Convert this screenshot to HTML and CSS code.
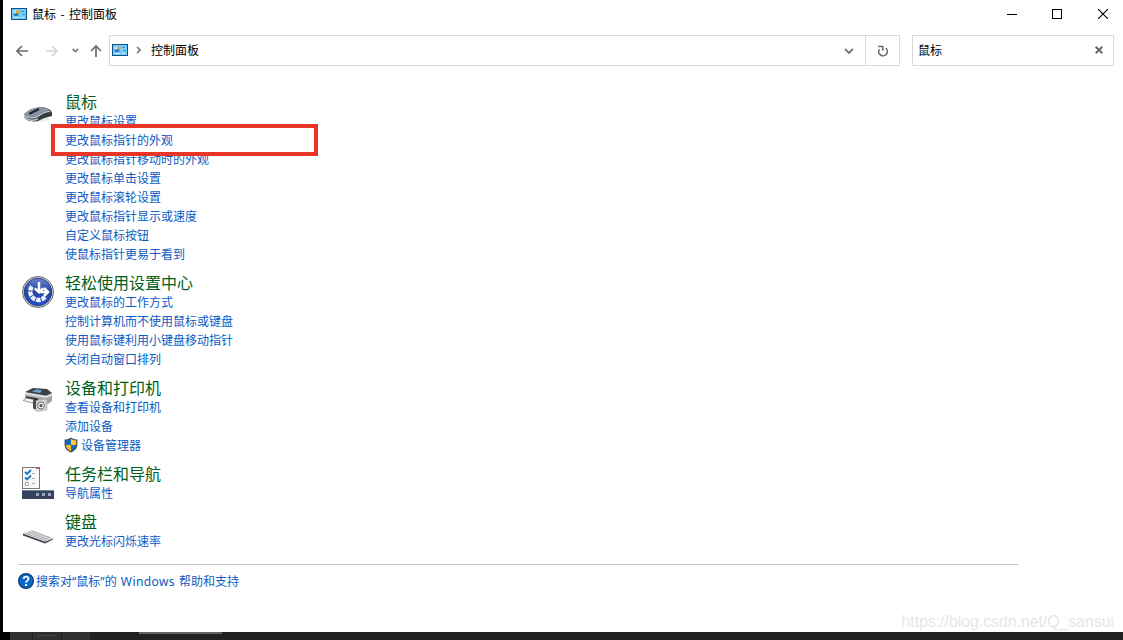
FILE: index.html
```html
<!DOCTYPE html>
<html lang="zh-CN">
<head>
    <meta charset="UTF-8" />
    <meta name="viewport" content="width=device-width, initial-scale=1.0" />
    <title>鼠标 - 控制面板</title>
    <link rel="stylesheet" href="styles.css">
</head>
<body>
    <!-- Shared icons -->
    <svg class="sprite" aria-hidden="true">
        <symbol id="icon-panel" viewBox="0 0 16 12">
            <rect width="16" height="12" fill="#0f5288" />
            <rect x="1" y="1" width="14" height="10" fill="#72cbfa" />
            <circle cx="5" cy="5.500" r="2.600" fill="#1579c5" />
            <path d="M5 5.500V2.500a3 3 0 0 0-3 3z" fill="#b5e3fb" />
            <path d="M5 5.500V2a3.400 3.400 0 0 1 3.300 3.500z" fill="#f7a52a" />
            <path d="M10 3.500h3M11 6.500h3" stroke="#3f94cc" />
            <path d="M10 6.500h1M3 9.500h5M10 9.500h3" stroke="#c9ecff" />
        </symbol>
    </svg>

    <div class="window">
        <!-- Title bar -->
        <header class="titlebar">
            <svg class="panel-icon"><use href="#icon-panel" /></svg>
            <span class="title">鼠标 - 控制面板</span>
            <div class="controls">
                <svg class="minimize" width="10" height="10" viewBox="0 0 10 10" shape-rendering="crispEdges"><path d="M0 5.500h10" stroke="#000" /></svg>
                <svg width="10" height="10" viewBox="0 0 10 10"><rect x=".5" y=".5" width="9" height="9" fill="none" stroke="#000" /></svg>
                <svg width="10" height="10" viewBox="0 0 10 10"><path d="M0 0l10 10M10 0L0 10" stroke="#000" stroke-width="1.1" /></svg>
            </div>
        </header>

        <!-- Navigation bar -->
        <nav class="navbar">
            <div class="nav-buttons">
                <svg width="12" height="12" viewBox="0 0 12 12"><path d="M12 6H1M6 1L1 6l5 5" fill="none" stroke="#6b6b6b" stroke-width="1.7" /></svg>
                <svg class="forward" width="12" height="12" viewBox="0 0 12 12"><path d="M0 6h11M6 1l5 5-5 5" fill="none" stroke="#d5d5d5" stroke-width="1.7" /></svg>
                <svg class="recent" width="7" height="5" viewBox="0 0 7 5"><path d="M.7.8l2.800 2.800L6.300.8" fill="none" stroke="#777" stroke-width="1.700" /></svg>
                <svg class="up" width="12" height="12" viewBox="0 0 12 12"><path d="M6 12V1M1 6l5-5 5 5" fill="none" stroke="#6b6b6b" stroke-width="1.7" /></svg>
            </div>
            <div class="address">
                <div class="path">
                    <svg class="panel-icon"><use href="#icon-panel" /></svg>
                    <svg class="crumb" width="5" height="8" viewBox="0 0 5 8"><path d="M1 1l3 3-3 3" fill="none" stroke="#777" stroke-width="1.6" /></svg>
                    <span>控制面板</span>
                    <svg class="dropdown" width="10" height="7" viewBox="0 0 10 7"><path d="M1 1l4 4 4-4" fill="none" stroke="#777" stroke-width="1.9" /></svg>
                </div>
                <div class="refresh">
                    <svg width="12" height="12" viewBox="0 0 12 12"><path d="M8.800 3.200A4.300 4.300 0 1 1 2.400 4.200" fill="none" stroke="#6b6b6b" stroke-width="1.600" /><path d="M1.200 1.600h4.600v4.200" fill="none" stroke="#6b6b6b" stroke-width="1.500" /></svg>
                </div>
            </div>
            <div class="search">
                <span>鼠标</span>
                <svg width="8" height="8" viewBox="0 0 8 8"><path d="M.7.7l6.600 6.600M7.300.7L.7 7.300" stroke="#6b6b6b" stroke-width="2" /></svg>
            </div>
        </nav>

        <!-- Search results -->
        <main class="results">
            <section class="group">
                <svg class="group-icon" width="32" height="40" viewBox="0 0 32 40">
                    <ellipse cx="16" cy="26" rx="12" ry="3" fill="#ececec" />
                    <path d="M2 21.500C5 18 12 14 19 14.300c6 .2 11 2.700 11 6.200v2.500c-4 .5-9 2.500-13 4.500-4 2-14 .5-15-3.500z" fill="#343a41" />
                    <path d="M2 21.500c3-4 10-7 17-7.200 5 0 8 2 8.500 4-4 0-8 2-11.500 5.200-4 2.500-12 2-14-2z" fill="#8794a3" />
                    <path d="M2 22c2 3.500 10 4 14 1.500 4-3 8-5 12-5" fill="none" stroke="#d7dce1" stroke-width="1" />
                    <path d="M2 23c2 4.500 9 5 14 3" fill="none" stroke="#b7bdc4" stroke-width="1.500" />
                    <path d="M8 20.500l8-4" stroke="#20252b" stroke-width="2.200" stroke-linecap="round" />
                </svg>
                <div class="links">
                    <h2>鼠标</h2>
                    <a href="#">更改鼠标设置</a>
                    <a href="#" class="marked">更改鼠标指针的外观</a>
                    <a href="#">更改鼠标指针移动时的外观</a>
                    <a href="#">更改鼠标单击设置</a>
                    <a href="#">更改鼠标滚轮设置</a>
                    <a href="#">更改鼠标指针显示或速度</a>
                    <a href="#">自定义鼠标按钮</a>
                    <a href="#">使鼠标指针更易于看到</a>
                </div>
            </section>

            <section class="group">
                <svg class="group-icon" width="32" height="36" viewBox="0 0 32 36">
                    <defs>
                        <linearGradient id="blue" x1="0" y1="0" x2="0" y2="1">
                            <stop offset="0" stop-color="#6685cc" />
                            <stop offset=".5" stop-color="#2445a5" />
                            <stop offset="1" stop-color="#2451cb" />
                        </linearGradient>
                    </defs>
                    <circle cx="16" cy="18" r="15.500" fill="#d7d9dd" stroke="#666a70" />
                    <circle cx="16" cy="18" r="13.800" fill="url(#blue)" stroke="#1b2d69" stroke-width=".8" />
                    <path d="M10 12.600A8 8 0 1 0 23 22.800" fill="none" stroke="#edf2fc" stroke-width="4.500" stroke-dasharray="4.300 1" />
                    <path d="M17 8v9.500M12.800 14.300l4.200 4 4.200-4M17 18h8M22 14l4 4-4 4" fill="none" stroke="#fff" stroke-width="2.500" />
                </svg>
                <div class="links">
                    <h2>轻松使用设置中心</h2>
                    <a href="#">更改鼠标的工作方式</a>
                    <a href="#">控制计算机而不使用鼠标或键盘</a>
                    <a href="#">使用鼠标键利用小键盘移动指针</a>
                    <a href="#">关闭自动窗口排列</a>
                </div>
            </section>

            <section class="group">
                <svg class="group-icon" width="32" height="40" viewBox="0 0 32 40">
                    <path d="M3 14l3-1 24 1v8l-4 3-23-4z" fill="#a2a4a7" />
                    <path d="M3 13l8-4 14 1 5 4-6 2.500z" fill="#3c4148" />
                    <path d="M10 12.500l4-2 6 .8-2 2.700z" fill="#67a5d3" />
                    <path d="M3 13.500l21 3.500 6-2.500v2L24 19 3 15.500z" fill="#dfe0e2" />
                    <path d="M4 17.500l12 2v3l-12-2z" fill="#25272b" />
                    <path d="M1 21.500l3-2.500 8 1.500-1 3.500z" fill="#f4f4f4" stroke="#777" stroke-width=".7" />
                    <path d="M14 21.500l9-1.500 2 1v10l-10 1.500-2-1.500z" fill="#d0d2d4" stroke="#999" stroke-width=".5" />
                    <path d="M11 20.500l3 .5v9.500l-3-1z" fill="#4b4e52" />
                    <circle cx="19" cy="26.500" r="3.500" fill="#e7e7e7" stroke="#6c6e72" />
                    <circle cx="19" cy="26.500" r="1.500" fill="#4d5157" />
                </svg>
                <div class="links">
                    <h2>设备和打印机</h2>
                    <a href="#">查看设备和打印机</a>
                    <a href="#">添加设备</a>
                    <a href="#" class="admin">
                        <svg width="14" height="16" viewBox="0 0 14 16">
                            <path d="M7 .5C5 2 2.800 2.500.6 2.500v5c0 4 3 6.500 6.400 8 3.400-1.500 6.400-4 6.400-8v-5C11.200 2.500 9 2 7 .5z" fill="#3d4b59" />
                            <path d="M7 1.800C5.500 2.900 3.600 3.400 1.800 3.500V8H7z" fill="#1768c5" />
                            <path d="M7 1.800C8.500 2.900 10.400 3.400 12.200 3.500V8H7z" fill="#ffc72c" />
                            <path d="M1.800 8H7v6.200C4.300 12.900 2 11 1.800 8z" fill="#ffc02a" />
                            <path d="M12.200 8H7v6.200c2.700-1.300 5-3.200 5.200-6.200z" fill="#1768c5" />
                        </svg>
                        设备管理器
                    </a>
                </div>
            </section>

            <section class="group">
                <svg class="group-icon" width="32" height="36" viewBox="0 0 32 36">
                    <rect x=".5" y="2.500" width="17" height="21" fill="#f8f8f8" stroke="#777" />
                    <path d="M14 3.500h3" stroke="#d94c4c" />
                    <path d="M3.500 17.500h3v3h-3z" fill="#fff" stroke="#aaa" />
                    <path d="M3 7l2 2 4-4M3 12.500l2 2 4-4" fill="none" stroke="#1679bd" stroke-width="1.800" />
                    <path d="M10 8.500h3M10 13.500h3M10 18.500h3" stroke="#aaa" />
                    <rect y="25" width="32" height="9" fill="#35425d" />
                    <path d="M0 25.500h32" stroke="#7482a0" />
                    <path d="M14 28h3v3h-3zM20 28h3v3h-3zM26 28h3v3h-3z" fill="#9ca8bd" />
                </svg>
                <div class="links">
                    <h2>任务栏和导航</h2>
                    <a href="#">导航属性</a>
                </div>
            </section>

            <section class="group">
                <svg class="group-icon" width="32" height="38" viewBox="0 0 32 38">
                    <path d="M1 20.500l22 8 8-3v1l-8 4L1 22.500z" fill="#42474d" />
                    <path d="M1 20.500l9-3.500 21 8-8 3.500z" fill="#d2d4d6" />
                    <path d="M4 20.500l20 7M7 19.300l19 7M10 18l18 6.800" stroke="#92969a" stroke-width=".8" stroke-dasharray="1.500 1" />
                </svg>
                <div class="links">
                    <h2>键盘</h2>
                    <a href="#">更改光标闪烁速率</a>
                </div>
            </section>

            <!-- Help link -->
            <div class="help">
                <svg width="16" height="16" viewBox="0 0 16 16">
                    <circle cx="8" cy="8" r="7.400" fill="#0967c8" stroke="#103e70" stroke-width="1.200" />
                    <path d="M5.700 6c0-3 4.800-3 4.800-.3 0 2-2.400 1.800-2.400 4" fill="none" stroke="#fff" stroke-width="1.800" />
                    <path d="M7.100 11h2v2h-2z" fill="#fff" />
                </svg>
                <a href="#">搜索对<span class="quote">“</span>鼠标<span class="quote">”</span>的 <span class="latin">Windows</span> 帮助和支持</a>
            </div>
        </main>

        <div class="watermark">https://blog.csdn.net/Q_sansui</div>
    </div>

    <!-- Taskbar edge -->
    <footer class="taskbar">
        <span class="task"></span>
        <span class="task lined"></span>
        <span class="task"></span>
        <span class="active-line"></span>
    </footer>
</body>
</html>
```
FILE: styles.css
```css
:root {
    --link-color: #0b5bc4;
    --heading-color: #00611c;
    --border-color: #d9d9d9;
    --mark-color: #e93528;
}

*,
*::before,
*::after {
    margin: 0;
    padding: 0;
    box-sizing: border-box;
}

body {
    display: flex;
    flex-direction: column;
    width: 1123px;
    height: 640px;
    overflow: hidden;
    background: #000;
    color: #000;
    font-family: "Noto Sans CJK SC", sans-serif;
    font-size: 12px;
}

svg {
    display: block;
    flex: none;
}

.sprite {
    position: absolute;
    width: 0;
    height: 0;
}

.window {
    position: relative;
    height: 632px;
    margin-left: 3px;
    background: #fff;
}

.panel-icon {
    width: 16px;
    height: 12px;
}

/* Title bar */
.titlebar {
    display: flex;
    align-items: center;
    height: 29px;
    padding: 0 15px 1px 8px;
}

.title {
    margin-left: 5px;
    padding-bottom: 2px;
    word-spacing: 1.7px;
}

.controls {
    display: flex;
    gap: 36px;
    margin-left: auto;
}

.minimize {
    margin-right: -1px;
}

/* Navigation bar */
.navbar {
    display: flex;
    height: 37px;
    padding: 6px 9px 0 13px;
}

.nav-buttons {
    display: flex;
    align-items: center;
    width: 93px;
}

.forward {
    margin-left: 18px;
}

.recent {
    margin-left: 14px;
}

.up {
    margin-left: 11px;
}

.address {
    display: flex;
    width: 791px;
    border: 1px solid var(--border-color);
}

.path {
    display: flex;
    align-items: center;
    flex: 1;
    padding: 0 11px 2px 2px;
}

.crumb {
    margin: 0 10px 0 8px;
}

.dropdown {
    margin-top: 3px;
    margin-left: auto;
}

.refresh {
    display: flex;
    align-items: center;
    justify-content: center;
    width: 34px;
    border-left: 1px solid var(--border-color);
}

.search {
    display: flex;
    align-items: center;
    justify-content: space-between;
    width: 202px;
    margin-left: 12px;
    padding: 0 10px 2px 5px;
    border: 1px solid var(--border-color);
}

/* Search results */
.results {
    padding: 26px 0 0 15px;
}

.group {
    display: flex;
    margin-bottom: 10px;
    padding-left: 4px;
}

.group-icon {
    margin-top: 1px;
    margin-right: 11px;
    margin-bottom: -2px;
}

.links h2 {
    height: 19px;
    color: var(--heading-color);
    font-size: 16px;
    font-weight: 400;
    line-height: 19px;
}

.links a {
    display: block;
    height: 19px;
    line-height: 19px;
}

a {
    color: var(--link-color);
    text-decoration: none;
}

.marked {
    position: relative;
}

.marked::after {
    content: '';
    position: absolute;
    top: -6px;
    left: -14px;
    width: 267px;
    height: 32px;
    border: 4px solid var(--mark-color);
}

.links .admin {
    display: flex;
    align-items: center;
    gap: 3px;
    margin-left: -1px;
}

/* Help link */
.help {
    display: flex;
    align-items: center;
    gap: 2px;
    width: 1000px;
    margin-top: 14px;
    padding-top: 7px;
    border-top: 1px solid #c3c3c3;
    word-spacing: 1.5px;
}

.latin,
.quote {
    font-family: "Noto Sans", sans-serif;
}

.latin {
    letter-spacing: 0.4px;
}

.watermark {
    position: absolute;
    right: 9px;
    bottom: 1px;
    color: #e6e6e6;
    font-family: "Liberation Sans", sans-serif;
    font-size: 15.8px;
    line-height: 18px;
}

/* Taskbar edge */
.taskbar {
    display: flex;
    height: 8px;
    margin-left: 10px;
    background: #222;
}

.task {
    width: 22px;
    margin-right: 1px;
    background: #2f3032;
}

.lined {
    width: 28px;
    padding: 3px 4px 0;
}

.lined::before {
    content: '';
    display: block;
    height: 1px;
    background: #48494c;
}

.taskbar .task:nth-child(3) {
    width: 28px;
}

.active-line {
    width: 83px;
    height: 2px;
    margin-left: 48px;
    background: #626467;
}
```
